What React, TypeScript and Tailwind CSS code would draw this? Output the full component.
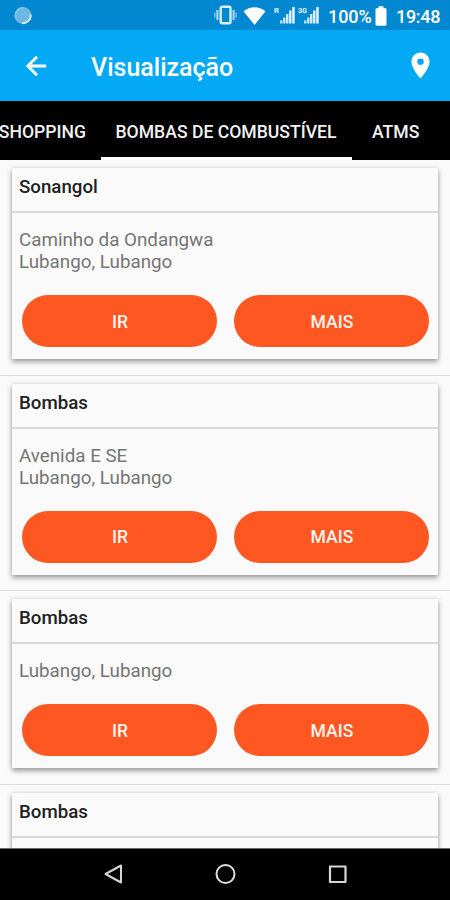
import { clsx } from "clsx";

type Station = {
  name: string;
  address: string[];
};

const TABS = [
  { label: "SHOPPING", className: "w-[101px] pr-[15px] justify-end" },
  { label: "BOMBAS DE COMBUSTÍVEL", className: "w-[251px] pr-px justify-center", active: true },
  { label: "ATMS", className: "w-[98px] pl-5 justify-start" },
];

const STATIONS: Station[] = [
  { name: "Sonangol", address: ["Caminho da Ondangwa", "Lubango, Lubango"] },
  { name: "Bombas", address: ["Avenida E SE", "Lubango, Lubango"] },
  { name: "Bombas", address: ["Lubango, Lubango"] },
  { name: "Bombas", address: [] },
];

function SignalIcon({ label }: { label: string }) {
  return (
    <svg className="h-[20px] w-[24px]" viewBox="0 0 24 20" fill="#fff">
      <text
        x="0"
        y="8"
        fontSize="8"
        fontWeight="700"
        fontFamily="Roboto"
        opacity="0.9"
        textLength={label.length > 1 ? 9 : 5}
        lengthAdjust="spacingAndGlyphs"
      >
        {label}
      </text>
      <rect x="6" y="15.5" width="2.5" height="3" opacity="0.75" />
      <rect x="9" y="12.5" width="2.5" height="6" opacity="0.75" />
      <rect x="12" y="9" width="2.5" height="9.5" opacity="0.8" />
      <rect x="15" y="5.5" width="2.5" height="13" opacity="0.85" />
      <rect x="18.2" y="2" width="2.5" height="16.5" opacity="0.9" />
    </svg>
  );
}

function StatusBar() {
  return (
    <div className="flex h-[30px] shrink-0 items-center bg-[#0288d1] pl-[14px] pr-[10px] text-white">
      <svg className="h-[19px] w-[19px]" viewBox="0 0 19 19">
        <circle cx="9" cy="9.5" r="8.5" fill="#6db9e3" />
        <path d="M16.6 8.5A7.8 7.8 0 0 1 8 17.2" fill="none" stroke="#d4effb" strokeWidth="1.8" />
        <path d="M2 12.5A7.8 7.8 0 0 1 9.5 1.7" fill="none" stroke="#8bcbea" strokeWidth="1.2" />
      </svg>
      <svg className="ml-auto h-[20px] w-[24px]" viewBox="0 0 24 20" fill="none" stroke="#fff">
        <rect x="6.7" y="1.8" width="9.8" height="16.4" rx="1.5" strokeWidth="2.4" opacity="0.85" />
        <path d="M3.4 5v10M19.6 5v10" strokeWidth="2" opacity="0.7" />
        <path d="M.8 7.5v5M22.2 7.5v5" strokeWidth="1.5" opacity="0.5" />
      </svg>
      <svg className="ml-[5px] mt-px h-[18px] w-[24px]" viewBox="0 0 24 18" fill="#fff">
        <path d="M11.5 18 .5 4.2C4 1.6 7.5.2 11.5.2s7.5 1.4 11 4z" />
      </svg>
      <div className="ml-[7px] flex">
        <SignalIcon label="R" />
        <SignalIcon label="3G" />
      </div>
      <span className="ml-[6px] mt-[3px] w-[43px] whitespace-nowrap text-[18px] leading-5 font-medium tracking-[-0.1px]">
        100%
      </span>
      <svg className="ml-[4px] mt-px h-[20px] w-[12px]" viewBox="0 0 12 20" fill="#fff">
        <path d="M3.5.2h5v2h1.8c.8 0 1.200.5 1.200 1.200v15.200c0 .8-.5 1.200-1.200 1.200H1.700c-.7 0-1.200-.5-1.200-1.200V3.400c0-.7.5-1.200 1.200-1.200h1.800z" />
      </svg>
      <span className="ml-[9px] mt-[3px] w-[44px] whitespace-nowrap text-[18px] leading-5 font-medium tracking-[-0.3px]">
        19:48
      </span>
    </div>
  );
}

function AppBar() {
  return (
    <header className="flex h-[71px] shrink-0 items-center bg-[#03a9f4] pl-[21px] pr-[14px] text-white">
      <svg className="h-[30px] w-[30px]" viewBox="0 0 24 24" fill="currentColor" stroke="currentColor" strokeWidth="0.4">
        <path d="M20 11H7.83l5.59-5.59L12 4l-8 8 8 8 1.41-1.41L7.83 13H20v-2z" />
      </svg>
      <h1 className="ml-[40px] mt-[4px] text-[25px] leading-8 font-medium">Visualização</h1>
      <svg className="ml-auto h-[31px] w-[31px]" viewBox="0 0 24 24" fill="currentColor">
        <path d="M12 2C8.13 2 5 5.13 5 9c0 5.25 7 13 7 13s7-7.75 7-13c0-3.87-3.13-7-7-7zm0 9.5a2.5 2.5 0 1 1 0-5 2.5 2.5 0 0 1 0 5z" />
      </svg>
    </header>
  );
}

function TabBar() {
  return (
    <nav className="flex h-[59px] shrink-0 overflow-hidden bg-black text-[17.6px] font-medium text-[#f2f2f2]">
      {TABS.map((tab) => (
        <div
          key={tab.label}
          className={clsx(
            "flex shrink-0 items-center whitespace-nowrap border-b-[3px] pt-[6px]",
            tab.active ? "border-white" : "border-transparent",
            tab.className,
          )}
        >
          {tab.label}
        </div>
      ))}
    </nav>
  );
}

function ActionButton({ label }: { label: string }) {
  return (
    <button className="h-[52px] w-[195px] rounded-full bg-[#ff5722] pt-[2px] pl-px text-[17.6px] font-medium text-[#fff3ee]">
      {label}
    </button>
  );
}

function StationCard({ station }: { station: Station }) {
  return (
    <li className="border-b border-[#dcdcdc] px-3 pt-2 pb-[15.6px]">
      <article className="bg-[#fafafa] pb-3 shadow-[0_3px_5px_rgba(0,0,0,0.34),0_0_5px_rgba(0,0,0,0.13)]">
        <h2 className="h-[45px] border-b-2 border-[#dadada] pl-[7px] pt-[7px] text-[18.7px] leading-6 font-medium text-[#212121]">
          {station.name}
        </h2>
        {station.address.length > 0 ? (
          <>
            <div className="pl-[7px] pt-[16px] pb-[22px] text-[18.8px] leading-[22px] text-[#757575]">
              {station.address.map((line) => (
                <p key={line}>{line}</p>
              ))}
            </div>
            <div className="flex justify-between pl-[10px] pr-[9px]">
              <ActionButton label="IR" />
              <ActionButton label="MAIS" />
            </div>
          </>
        ) : (
          <div className="h-8" />
        )}
      </article>
    </li>
  );
}

function NavigationBar() {
  return (
    <footer className="flex h-[52px] shrink-0 items-center justify-center gap-[88px] border-t border-[#6b6b6b] bg-black pb-[2px]">
      <svg className="h-6 w-6" viewBox="0 0 24 24" fill="none" stroke="#d6d6d6" strokeWidth="2">
        <path d="M20 3.5v17L4.5 12z" strokeLinejoin="round" />
      </svg>
      <svg className="h-6 w-6" viewBox="0 0 24 24" fill="none" stroke="#e0e0e0" strokeWidth="2">
        <circle cx="12.5" cy="12" r="9" />
      </svg>
      <svg className="h-6 w-6" viewBox="0 0 24 24" fill="none" stroke="#d6d6d6" strokeWidth="2.2">
        <rect x="5" y="4.5" width="15.5" height="15.5" strokeLinejoin="round" />
      </svg>
    </footer>
  );
}

export default function App() {
  return (
    <div className="flex h-screen w-full flex-col overflow-hidden bg-[#fafafa] font-[Roboto,sans-serif]">
      <StatusBar />
      <AppBar />
      <TabBar />
      <ul className="min-h-0 flex-1 overflow-hidden">
        {STATIONS.map((station, index) => (
          <StationCard key={index} station={station} />
        ))}
      </ul>
      <NavigationBar />
    </div>
  );
}
